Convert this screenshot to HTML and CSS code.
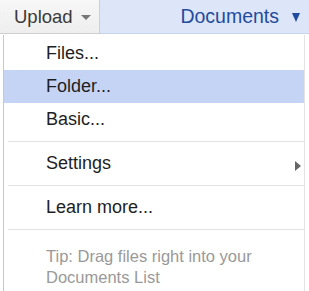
FILE: index.html
```html
<!DOCTYPE html>
<html lang="en">
<head>
    <meta charset="UTF-8">
    <title>Upload menu</title>
    <link rel="stylesheet" href="styles.css">
</head>
<body>
    <div class="topbar">
        <div class="upload-btn">
            <span>Upload</span>
            <span class="caret"></span>
        </div>
        <div class="doc-bar">
            <span class="doc-title">Documents</span>
            <span class="doc-caret"></span>
        </div>
    </div>

    <!-- Upload dropdown menu -->
    <div class="menu">
        <div class="item">Files...</div>
        <div class="item active">Folder...</div>
        <div class="item">Basic...</div>
        <div class="sep"></div>
        <div class="item submenu">
            <span>Settings</span>
            <span class="arrow"></span>
        </div>
        <div class="sep"></div>
        <div class="item">Learn more...</div>
        <div class="sep"></div>
        <div class="tip">Tip: Drag files right into your<br>Documents List</div>
    </div>
</body>
</html>
```

FILE: styles.css
```css
body {
    margin: 0;
    font-family: "Liberation Sans", Arial, sans-serif;
    background: #fff;
    overflow: hidden;
}

.topbar {
    display: flex;
    height: 34px;
}

.upload-btn {
    width: 100px;
    box-sizing: border-box;
    display: flex;
    align-items: center;
    padding-left: 14px;
    gap: 8px;
    background: linear-gradient(#f7f7f7, #eeeeee);
    border-right: 1px solid #cfcfcf;
    border-bottom: 1px solid #cfcfcf;
    font-size: 18.5px;
    color: #3a3a3a;
}

.caret {
    width: 0;
    height: 0;
    border-left: 5px solid transparent;
    border-right: 5px solid transparent;
    border-top: 5px solid #777;
    margin-top: 2px;
}

.doc-bar {
    flex: 1;
    display: flex;
    align-items: center;
    justify-content: flex-end;
    padding-right: 9px;
    gap: 13px;
    background: #dde5f9;
    border-bottom: 1px solid #c9d3ea;
}

.doc-title {
    color: #1f4c9e;
    font-size: 19.5px;
}

.doc-caret {
    width: 0;
    height: 0;
    border-left: 4.5px solid transparent;
    border-right: 4.5px solid transparent;
    border-top: 9px solid #1f4c9e;
    margin-top: 2px;
}

.menu {
    margin: 1px 4px 0 3px;
    border-left: 1px solid #c8c8c8;
    border-right: 1px solid #e4e4e4;
    padding: 2px 0 8px;
}

.item {
    height: 33px;
    display: flex;
    align-items: center;
    padding-left: 42px;
    font-size: 18px;
    color: #1e1e1e;
}

.item.active {
    background: #c5d3f5;
}

.submenu {
    justify-content: space-between;
    padding-right: 3px;
}

.arrow {
    width: 0;
    height: 0;
    border-top: 5px solid transparent;
    border-bottom: 5px solid transparent;
    border-left: 6px solid #666;
    margin-top: 4px;
}

.sep {
    height: 1px;
    background: #e2e2e2;
    margin: 5px 0 5px 4px;
}

.tip {
    padding: 11px 0 0 42px;
    font-size: 16.5px;
    line-height: 21px;
    color: #999;
}
```
